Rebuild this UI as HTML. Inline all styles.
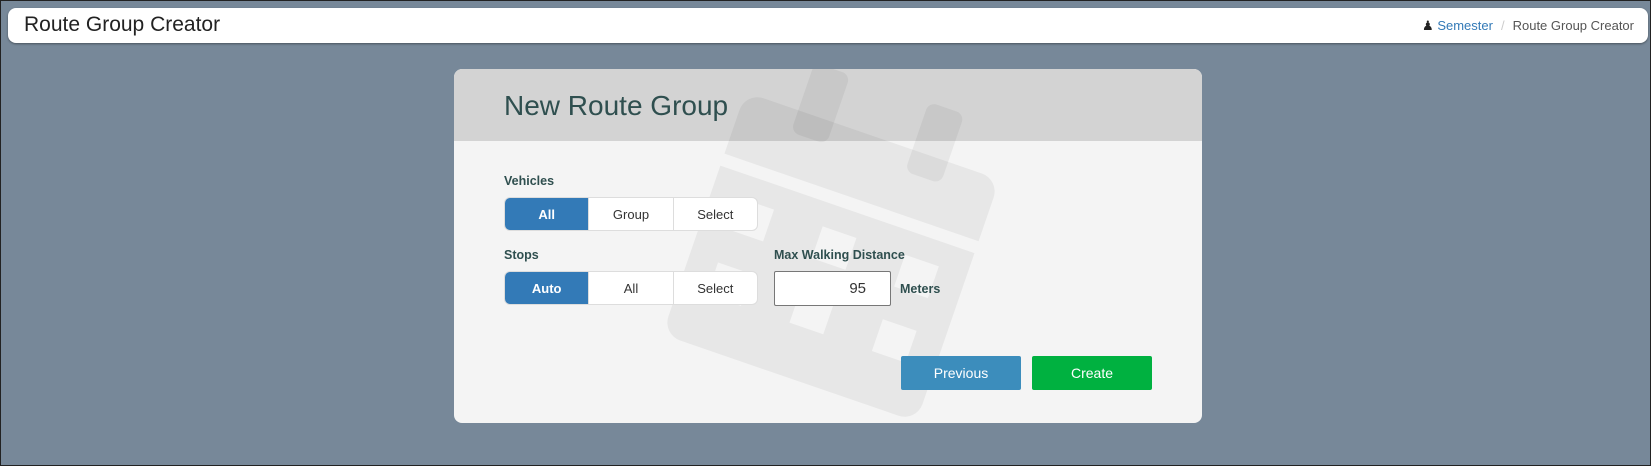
<!DOCTYPE html>
<html><head><meta charset="utf-8"><style>
*{box-sizing:border-box;margin:0;padding:0}
body{width:1651px;height:466px;background:#778899;font-family:"Liberation Sans",sans-serif;position:relative;overflow:hidden;border:1px solid #222}
.top{position:absolute;left:7px;top:7px;width:1640px;height:35px;background:#fff;border-radius:8px;box-shadow:0 1px 2px rgba(0,0,0,.4)}
.top h1{position:absolute;left:16px;top:5px;font-weight:normal;font-size:21px;color:#222}
.bc{position:absolute;right:14px;top:10px;font-size:13px;color:#555}
.bc a{color:#337ab7}
.bc .s{color:#ccc;margin:0 8px}
.card{position:absolute;left:453px;top:68px;width:748px;height:354px;background:#f4f4f4;border-radius:8px;overflow:hidden}
.hd{position:absolute;left:0;top:0;width:100%;height:72px;background:#d3d3d3}
.hd h2{position:absolute;left:50px;top:21px;font-weight:normal;font-size:28px;color:#2f4f4f}
svg.wm{position:absolute;left:0;top:0}
.lbl{position:absolute;font-size:12.5px;font-weight:bold;color:#2f4f4f}
.grp{position:absolute;left:50px;width:254px;height:34px;display:flex;background:#fff;border:1px solid #ddd;border-radius:6px;overflow:hidden}
.grp div{flex:1;display:flex;align-items:center;justify-content:center;font-size:13px;color:#333;border-left:1px solid #ddd}
.grp div:first-child{border-left:none}
.grp .on{background:#337ab7;color:#fff;font-weight:bold}
.inp{position:absolute;left:320px;top:202px;width:117px;height:35px;background:#fff;border:1px solid #777;border-radius:2px;font-size:15px;color:#333;text-align:right;padding:8px 24px 0 0}
.btn{position:absolute;top:287px;width:120px;height:34px;color:#fff;font-size:14px;display:flex;align-items:center;justify-content:center;border-radius:2px}
</style></head><body>
<div class="top"><h1>Route Group Creator</h1>
<div class="bc"><span style="color:#222">&#9823;</span> <a>Semester</a><span class="s">/</span>Route Group Creator</div></div>
<div class="card">
<div class="hd"><h2>New Route Group</h2></div>
<svg class="wm" width="748" height="354"><g transform="translate(377,188) rotate(19) scale(1.05)" fill="rgba(0,0,0,0.05)" fill-rule="evenodd">
<path d="M-110,-122 H110 a18,18 0 0 1 18,18 V-60 H-128 V-104 a18,18 0 0 1 18,-18Z"/>
<rect x="-75" y="-170" width="36" height="70" rx="8"/>
<rect x="40" y="-170" width="36" height="70" rx="8"/>
<path d="M-128,-48 H128 V104 a18,18 0 0 1 -18,18 H-110 a18,18 0 0 1 -18,-18Z
M-100,-25 h34 v32 h-34Z M-17,-25 h34 v32 h-34Z M66,-25 h34 v32 h-34Z
M-100,40 h34 v32 h-34Z M-17,40 h34 v32 h-34Z M66,40 h34 v32 h-34Z"/>
</g></svg>
<div class="lbl" style="left:50px;top:105px">Vehicles</div>
<div class="grp" style="top:128px"><div class="on">All</div><div>Group</div><div>Select</div></div>
<div class="lbl" style="left:50px;top:179px">Stops</div>
<div class="grp" style="top:202px"><div class="on">Auto</div><div>All</div><div>Select</div></div>
<div class="lbl" style="left:320px;top:179px">Max Walking Distance</div>
<div class="inp">95</div>
<div class="lbl" style="left:446px;top:213px">Meters</div>
<div class="btn" style="left:447px;background:#3c8dbc">Previous</div>
<div class="btn" style="left:578px;background:#00b140">Create</div>
</div>
</body></html>
